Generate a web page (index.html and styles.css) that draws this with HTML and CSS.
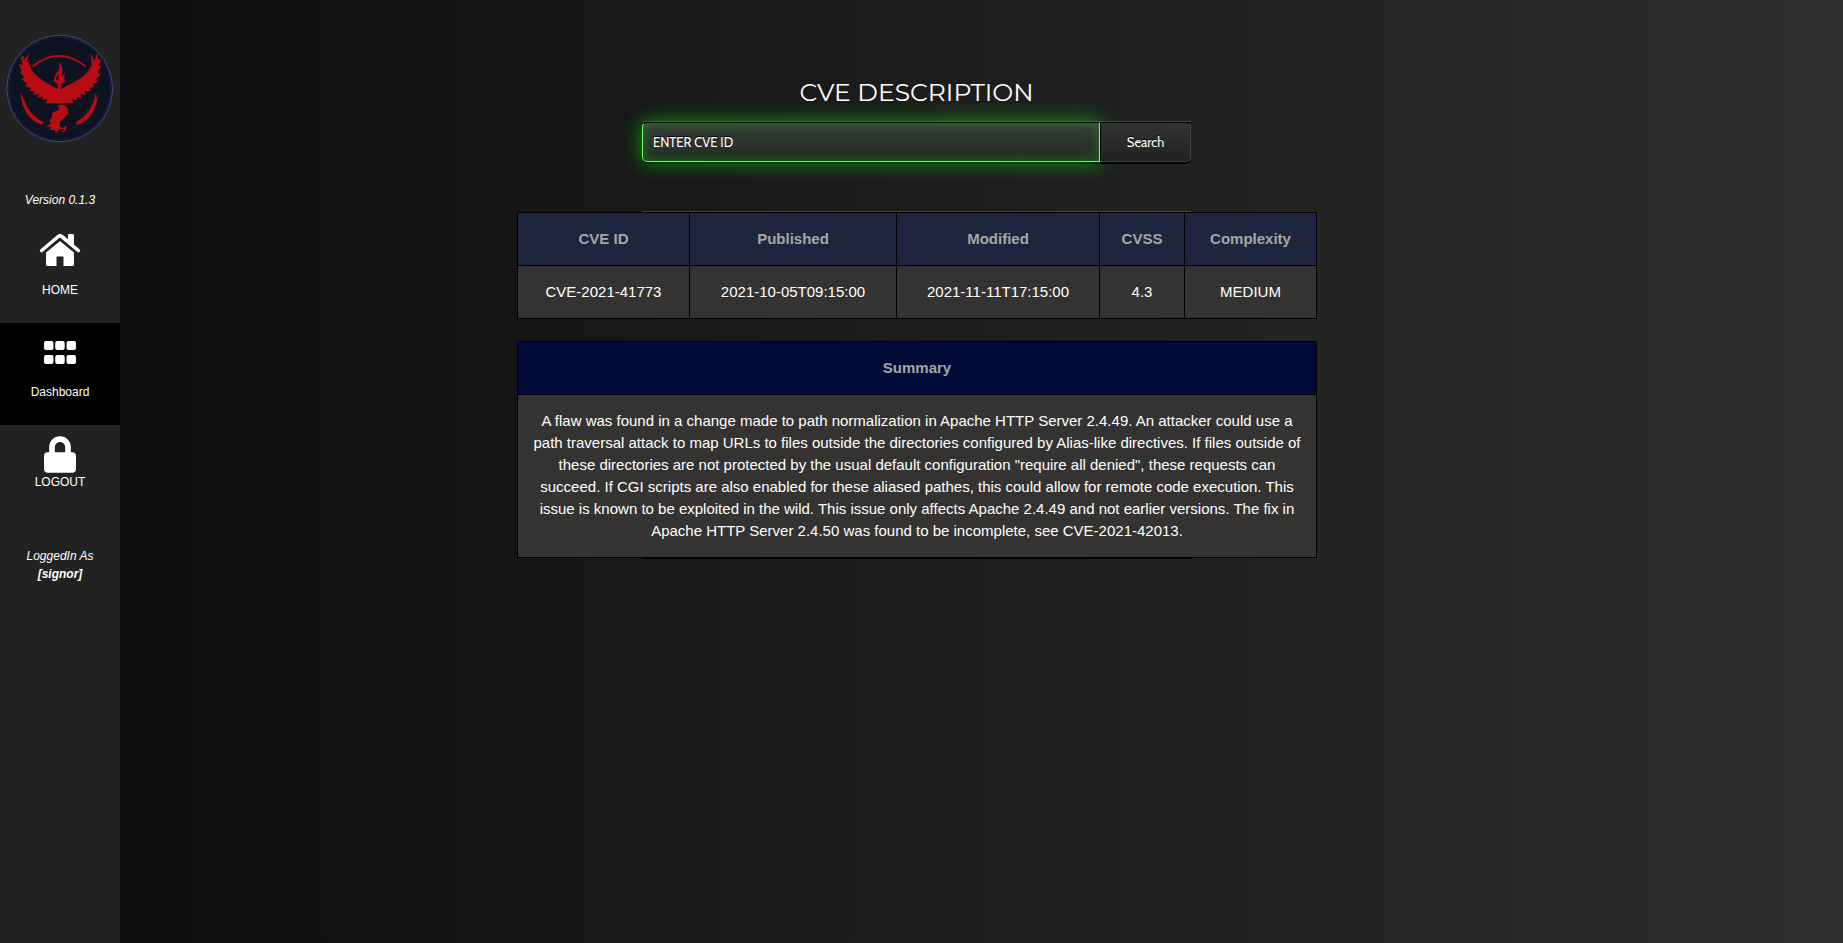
FILE: index.html
```html
<!DOCTYPE html>
<html lang="en">
<head>
<meta charset="utf-8">
<title>CVE Description</title>
<link rel="stylesheet" href="styles.css">
</head>
<body>
<nav class="sidebar">
  <svg class="logo" viewBox="0 0 108 110" aria-label="Logo">
    <ellipse cx="53.7" cy="54.500" rx="52.800" ry="53.300" fill="#0d1321" stroke="#3c4c7c" stroke-width="1"/>
    <ellipse cx="53.7" cy="54.500" rx="51.200" ry="51.700" fill="none" stroke="#1f2a4a" stroke-width=".7"/>
    <path d="M26.500 32.500Q53 11 79.500 32.500" fill="none" stroke="#b80c14" stroke-width="1.700"/>
    <g fill="#b80c14">
      <path d="M14 58L16 65L15.500 59L19 68Q24 82 37.500 88L36 91Q17 85 14 58Z"/>
      <path d="M92.500 58L90 65L89.500 58L87 69Q82 82 70 88L71 91Q90 85 92.500 58Z"/>
      <path d="M53.500 56.500C46 51 37 48 31 42C27 38 24 34 24.500 30L22.500 31L23 27L20 28L24 19L17.500 26L18 22L14.500 23L17 31L13 30L15.500 37L14 38L18.500 44L15.500 45L21 50L19 52L25 54L23 57L29 57L27.500 61L33 60L31 64L37 63L36 66L41 65L40 69H67L66 65L71 66L70 63L76 64L74 60L80 61L78 57L85 57L83 54L88 53L87 50L92 48L90 45L95 40L91.500 39L95 32L92 32L95.500 26L92 25L91 19L88.500 27L84.500 19L86 31C84 36 80 40 76 43C70 48 61 51 53.500 56.500Z"/>
      <path fill-rule="evenodd" d="M52 57L51.500 50C46.500 48 47.500 42 51.500 38C54 35 53 31 54 27.500L55.500 33C58 37 55 40 55 43L59.500 39C56.500 43 60 46 58.500 48L55.500 50L55 57ZM52.500 40C49.500 43 50 46 52 47Z"/>
      <path d="M52 71L58 70.500L61.500 74L62.500 80L58 84L54 88L54 93L57 94L61 91L60 96L56 99L58 95L53 95L50 100L49 96L44 96L45 93L39.500 93L44.500 90L43.500 86L46 83L46 79L50 77L53 76Z"/>
    </g>
  </svg>
  <div class="version">Version 0.1.3</div>
  <a class="item home">
    <svg width="42" height="34" viewBox="0 0 42 34" fill="#fff">
      <path d="M7 18L21 6.500L35 18V31.500Q35 33 33.500 33H24.500V23.500H17.500V33H8.500Q7 33 7 31.500Z"/>
      <path d="M3 17.800L21 3.300L39 17.800" fill="none" stroke="#222" stroke-width="7.500" stroke-linecap="round"/>
      <path d="M29 1.500Q29 1 30 1H33.500Q35 1 35 2V12L29 7Z"/>
      <path d="M2.700 17.500L19.200 3.500Q21 2 22.800 3.500L39.300 17.500" fill="none" stroke="#fff" stroke-width="3.600" stroke-linecap="round"/>
    </svg>
    <span>HOME</span>
  </a>
  <a class="item dashboard">
    <svg width="32" height="23" viewBox="0 0 32 23" fill="#fff">
      <rect width="9.500" height="9" rx="2"/><rect x="11.200" width="9.500" height="9" rx="2"/><rect x="22.500" width="9.500" height="9" rx="2"/>
      <rect y="14" width="9.500" height="9" rx="2"/><rect x="11.200" y="14" width="9.500" height="9" rx="2"/><rect x="22.500" y="14" width="9.500" height="9" rx="2"/>
    </svg>
    <span>Dashboard</span>
  </a>
  <a class="item logout">
    <svg width="32" height="37" viewBox="0 0 448 512" fill="#fff">
      <path d="M400 224h-24v-72C376 68.200 307.800 0 224 0S72 68.200 72 152v72H48c-26.500 0-48 21.500-48 48v192c0 26.500 21.500 48 48 48h352c26.500 0 48-21.500 48-48V272c0-26.500-21.500-48-48-48zm-104 0H152v-72c0-39.700 32.300-72 72-72s72 32.300 72 72v72z"/>
    </svg>
    <span>LOGOUT</span>
  </a>
  <div class="user">LoggedIn As<br><b>[signor]</b></div>
</nav>
<main class="content">
  <h1 class="title">CVE DESCRIPTION</h1>
  <form class="search">
    <input class="field" type="text" placeholder="ENTER CVE ID" aria-label="CVE ID"><button class="submit" type="button">Search</button>
  </form>
  <section class="results">
    <table class="facts">
      <colgroup><col class="c1"><col class="c2"><col class="c3"><col class="c4"><col class="c5"></colgroup>
      <tr><th>CVE ID</th><th>Published</th><th>Modified</th><th>CVSS</th><th>Complexity</th></tr>
      <tr><td>CVE-2021-41773</td><td>2021-10-05T09:15:00</td><td>2021-11-11T17:15:00</td><td>4.3</td><td>MEDIUM</td></tr>
    </table>
    <table class="summary">
      <tr><th>Summary</th></tr>
      <tr><td>A flaw was found in a change made to path normalization in Apache HTTP Server 2.4.49. An attacker could use a path traversal attack to map URLs to files outside the directories configured by Alias-like directives. If files outside of these directories are not protected by the usual default configuration "require all denied", these requests can succeed. If CGI scripts are also enabled for these aliased pathes, this could allow for remote code execution. This issue is known to be exploited in the wild. This issue only affects Apache 2.4.49 and not earlier versions. The fix in Apache HTTP Server 2.4.50 was found to be incomplete, see CVE-2021-42013.</td></tr>
    </table>
  </section>
</main>
</body>
</html>
```
FILE: styles.css
```css
* { box-sizing: border-box; }
body {
  margin: 0;
  height: 943px;
  display: flex;
  overflow: hidden;
  color: #fff;
  font: 15px/22px "Liberation Sans", Arial, sans-serif;
  background: linear-gradient(to right, #0c0c0c, #2d2d2d);
}
.sidebar {
  width: 120px;
  height: 943px;
  background: #222;
  display: flex;
  flex-direction: column;
  align-items: center;
  font-size: 12px;
  line-height: 18px;
  text-align: center;
}
.logo { width: 108px; height: 110px; margin-top: 34px; flex: none; }
.version { font-style: italic; margin-top: 47px; }
.item { width: 120px; display: flex; flex-direction: column; align-items: center; }
.home { height: 114px; padding-top: 24px; }
.home span { margin-top: 14px; }
.dashboard { height: 102px; padding-top: 18px; background: #000; }
.dashboard span { margin-top: 19px; }
.logout { padding-top: 11px; }
.user { font-style: italic; margin-top: 56px; }
.content { flex: 1; display: flex; flex-direction: column; align-items: center; padding-right: 130px; }
.title {
  margin: 75px 0 0;
  height: 46px;
  font: 400 25px/35px Montserrat, "Open Sans", sans-serif;
  white-space: nowrap;
}
.search {
  width: 549px;
  height: 43px;
  display: flex;
  border-top: 1px solid #444;
  box-shadow: inset 0 1px #000;
}
.field {
  width: 458px;
  height: 40px;
  padding: 0 10px;
  outline: 0;
  border: 1px solid #6f6;
  border-top-color: #000;
  border-radius: 5px 0 0 5px;
  background: linear-gradient(#373b37, #222a23);
  box-shadow: 0 0 20px rgba(0,255,0,.6), inset 0 0 12px rgba(0,255,0,.35), 0 2px 0 #000;
  color: #fff;
  font: 13px Cabin, Cantarell, Lato, sans-serif;
  text-shadow: 0 -1px #000;
}
.field::placeholder { color: #fff; opacity: 1; }
.submit {
  width: 91px;
  height: 40px;
  padding: 0;
  border: 1px solid #444;
  border-top-color: #000;
  border-left-color: #000;
  border-radius: 0 5px 5px 0;
  background: linear-gradient(#333, #222);
  box-shadow: 0 2px #000;
  color: #fff;
  font: 13px Cabin, Cantarell, Lato, sans-serif;
  text-shadow: 0 -1px #000;
}
.results {
  width: 549px;
  margin-top: 47px;
  border-top: 1px solid #444;
  display: flex;
  flex-direction: column;
  align-items: center;
  box-shadow: 0 1px #000;
}
table { width: 800px; margin-left: 1px; flex: none; table-layout: fixed; border-collapse: collapse; text-align: center; }
th, td { border: 1px solid #000; padding: 15px 12px; }
td { background: #353331; }
th { color: #a6a6a6; background: #1e253f; }
.facts td { padding-left: 0; padding-right: 0; }
.c1 { width: 172px; }
.c2 { width: 207px; }
.c3 { width: 203px; }
.c4 { width: 85px; }
.c5 { width: 132px; }
.summary { margin-top: 22px; }
.summary th { background: #000b37; }
```
